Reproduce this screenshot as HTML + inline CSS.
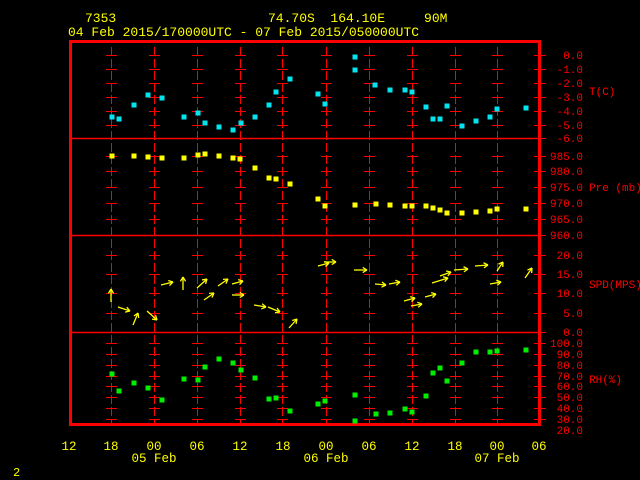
<!DOCTYPE html>
<html><head><meta charset="utf-8"><style>
html,body{margin:0;padding:0;background:#000;width:640px;height:480px;overflow:hidden}
svg{display:block}
text{font-family:"Liberation Mono","DejaVu Sans Mono",monospace}
.y{fill:#ffff00;font-size:13px}
.x{fill:#ffff00;font-size:12.5px;text-anchor:middle}
.r{fill:#ff0000;font-size:11px;text-anchor:end}
.l{fill:#ff0000;font-size:11px}
</style></head><body>
<svg id="s" width="640" height="480" xmlns="http://www.w3.org/2000/svg">
<text class="y" x="85" y="22">7353</text>
<text class="y" x="268" y="22" xml:space="preserve">74.70S  164.10E     90M</text>
<text class="y" x="68" y="36">04 Feb 2015/170000UTC - 07 Feb 2015/050000UTC</text>
<g id="grid" stroke="#ff0000" stroke-width="1"></g>
<rect x="70.5" y="41.5" width="469" height="383" fill="none" stroke="#ff0000" stroke-width="3"/>
<g stroke="#ff0000" stroke-width="1.5"><line x1="70" y1="138.5" x2="540" y2="138.5"/><line x1="70" y1="235.5" x2="540" y2="235.5"/><line x1="70" y1="332.5" x2="540" y2="332.5"/></g>
<g id="pts"></g>
<g id="wind" stroke="#ffff00" stroke-width="1.3" fill="none"></g>
<text class="r" x="583" y="59">0.0</text><text class="r" x="583" y="73">-1.0</text><text class="r" x="583" y="87">-2.0</text><text class="r" x="583" y="101">-3.0</text><text class="r" x="583" y="115">-4.0</text><text class="r" x="583" y="129">-5.0</text><text class="r" x="583" y="142">-6.0</text>
<text class="r" x="583" y="160">985.0</text><text class="r" x="583" y="175">980.0</text><text class="r" x="583" y="191">975.0</text><text class="r" x="583" y="207">970.0</text><text class="r" x="583" y="223">965.0</text><text class="r" x="583" y="239">960.0</text>
<text class="r" x="583" y="259">20.0</text><text class="r" x="583" y="278">15.0</text><text class="r" x="583" y="297">10.0</text><text class="r" x="583" y="317">5.0</text><text class="r" x="583" y="336">0.0</text>
<text class="r" x="583" y="347">100.0</text><text class="r" x="583" y="358">90.0</text><text class="r" x="583" y="369">80.0</text><text class="r" x="583" y="380">70.0</text><text class="r" x="583" y="390">60.0</text><text class="r" x="583" y="401">50.0</text><text class="r" x="583" y="412">40.0</text><text class="r" x="583" y="423">30.0</text><text class="r" x="583" y="434">20.0</text>
<text class="l" x="589" y="95">T(C)</text>
<text class="l" x="589" y="191" xml:space="preserve">Pre (mb)</text>
<text class="l" x="589" y="288">SPD(MPS)</text>
<text class="l" x="589" y="383">RH(%)</text>
<text class="x" x="69" y="450">12</text><text class="x" x="111" y="450">18</text><text class="x" x="154" y="450">00</text><text class="x" x="197" y="450">06</text><text class="x" x="240" y="450">12</text><text class="x" x="283" y="450">18</text><text class="x" x="326" y="450">00</text><text class="x" x="369" y="450">06</text><text class="x" x="412" y="450">12</text><text class="x" x="455" y="450">18</text><text class="x" x="497" y="450">00</text><text class="x" x="539" y="450">06</text>
<text class="x" x="154" y="462">05 Feb</text><text class="x" x="326" y="462">06 Feb</text><text class="x" x="497" y="462">07 Feb</text>
<text class="y" x="13" y="476" style="font-size:12px">2</text>
</svg>
<script>
var NS="http://www.w3.org/2000/svg";
function el(p,t,a){var e=document.createElementNS(NS,t);for(var k in a)e.setAttribute(k,a[k]);p.appendChild(e);return e;}
var g=document.getElementById('grid');
var cols=[111,154,197,240,282,326,369,412,455,497];
var ticks=[55,69,83,97,111,125,156,171,187,203,219,255,274,293,313,343,354,365,376,386,397,408,419];
var rt=[55,69,83,97,111,125,138,156,171,187,203,219,235,255,274,293,313,332,343,354,365,376,386,397,408,419];
cols.forEach(function(x){
 el(g,'line',{x1:x+.5,y1:47,x2:x+.5,y2:424,'stroke-dasharray':'9,3'});
 ticks.forEach(function(y){el(g,'line',{x1:x-5,y1:y+.5,x2:x+6,y2:y+.5});});
});
rt.forEach(function(y){el(g,'line',{x1:534,y1:y+.5,x2:546,y2:y+.5});});
var P=document.getElementById('pts');
function sq(a,c){a.forEach(function(p){el(P,'rect',{x:p[0]-2.5,y:p[1]-2.5,width:5,height:5,fill:c});});}
sq([[112,117],[119,119],[134,105],[148,95],[162,98],[184,117],[198,113],[205,123],[219,127],[233,130],[241,123],[255,117],[269,105],[276,92],[290,79],[318,94],[325,104],[355,57],[355,70],[375,85],[390,90],[405,90],[412,92],[426,107],[433,119],[440,119],[447,106],[462,126],[476,121],[490,117],[497,109],[526,108]],'#00e5ee');
sq([[112,156],[134,156],[148,157],[162,158],[184,158],[198,155],[205,154],[219,156],[233,158],[240,159],[255,168],[269,178],[276,179],[290,184],[318,199],[325,206],[355,205],[376,204],[390,205],[405,206],[412,206],[426,206],[433,208],[440,210],[447,213],[462,213],[476,212],[490,211],[497,209],[526,209]],'#ffff00');
sq([[112,374],[119,391],[134,383],[148,388],[162,400],[184,379],[198,380],[205,367],[219,359],[233,363],[241,370],[255,378],[269,399],[276,398],[290,411],[318,404],[325,401],[355,395],[355,421],[376,414],[390,413],[405,409],[412,412],[426,396],[433,373],[440,368],[447,381],[462,363],[476,352],[490,352],[497,351],[526,350]],'#00ee00');
var W=document.getElementById('wind');
function ar(x1,y1,x2,y2){el(W,'line',{x1:x1,y1:y1,x2:x2,y2:y2});var a=Math.atan2(y2-y1,x2-x1),h=5;
[a+2.6,a-2.6].forEach(function(b){el(W,'line',{x1:x2,y1:y2,x2:x2+h*Math.cos(b),y2:y2+h*Math.sin(b)});});}
[[111,302,111,289],[118,307,130,311],[133,325,138,313],[147,311,157,320],[161,285,173,282],[183,290,183,277],[197,288,207,279],[204,300,214,293],[218,286,228,279],[232,284,243,281],[232,295,244,295],[254,305,266,307],[268,307,280,312],[289,328,297,319],
[318,266,329,263],[324,262,336,262],[354,270,367,270],[375,284,386,285],[389,284,400,282],[404,301,415,298],[411,306,422,304],[425,297,436,294],[432,283,448,278],[440,276,451,272],[454,270,468,269],[475,266,488,265],[497,271,503,262],[490,284,501,282],[525,278,532,268]].forEach(function(a){ar(a[0],a[1],a[2],a[3]);});
</script>
</body></html>
